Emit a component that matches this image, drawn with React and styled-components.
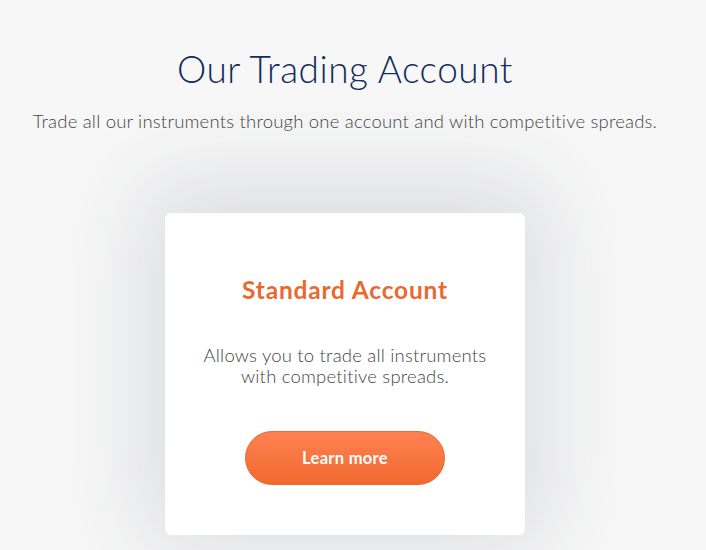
import React from 'react'
import styled, { createGlobalStyle } from 'styled-components'

const GlobalStyle = createGlobalStyle`
  html, body {
    margin: 0;
    padding: 0;
    background: #f7f7f7;
  }
  body {
    font-family: Lato, "Open Sans", sans-serif;
  }
`

function App() {
  return (
    <Page>
      <GlobalStyle />
      <Title>Our Trading Account</Title>
      <Subtitle>Trade all our instruments through one account and with competitive spreads.</Subtitle>
      <Card>
        <CardTitle>Standard Account</CardTitle>
        <CardText>
          Allows you to trade all instruments
          <br />
          with competitive spreads.
        </CardText>
        <Button>Learn more</Button>
      </Card>
    </Page>
  )
}

export default App

const Page = styled.div`
  width: 690px;
  height: 550px;
  overflow: visible;
  display: flex;
  flex-direction: column;
  align-items: center;
  background: #f7f7f7;
`

const Title = styled.h1`
  margin: 47px 0 0 0;
  font-family: Lato, sans-serif;
  font-weight: 300;
  font-size: 37px;
  line-height: 44px;
  color: #132d5c;
  letter-spacing: 0.5px;
  white-space: nowrap;
`

const Subtitle = styled.p`
  margin: 18px 0 0 0;
  font-family: Lato, sans-serif;
  font-weight: 300;
  font-size: 18.5px;
  line-height: 24px;
  color: #454545;
  letter-spacing: 0.2px;
  white-space: nowrap;
`

const Card = styled.div`
  margin-top: 80px;
  width: 360px;
  height: 322px;
  flex-shrink: 0;
  box-sizing: border-box;
  background: #ffffff;
  border-radius: 6px;
  box-shadow: 0 -10px 90px 24px rgba(40, 50, 80, 0.12);
  display: flex;
  flex-direction: column;
  align-items: center;
  padding-top: 62px;
`

const CardTitle = styled.h2`
  margin: 0;
  font-family: Lato, sans-serif;
  font-weight: 700;
  font-size: 24.5px;
  line-height: 30px;
  color: #e86a30;
  letter-spacing: 0.8px;
`

const CardText = styled.p`
  margin: 40px 0 0 0;
  text-align: center;
  font-family: Lato, sans-serif;
  font-weight: 300;
  font-size: 18.5px;
  line-height: 21px;
  color: #454545;
  letter-spacing: 0.2px;
`

const Button = styled.button`
  margin-top: 44px;
  width: 200px;
  height: 54px;
  border-radius: 27px;
  border: 1px solid #e8692c;
  background: linear-gradient(180deg, #ff8152 0%, #f06a2f 100%);
  color: #ffffff;
  font-family: Lato, sans-serif;
  font-weight: 700;
  font-size: 16.5px;
  letter-spacing: 0.3px;
  cursor: pointer;
`
